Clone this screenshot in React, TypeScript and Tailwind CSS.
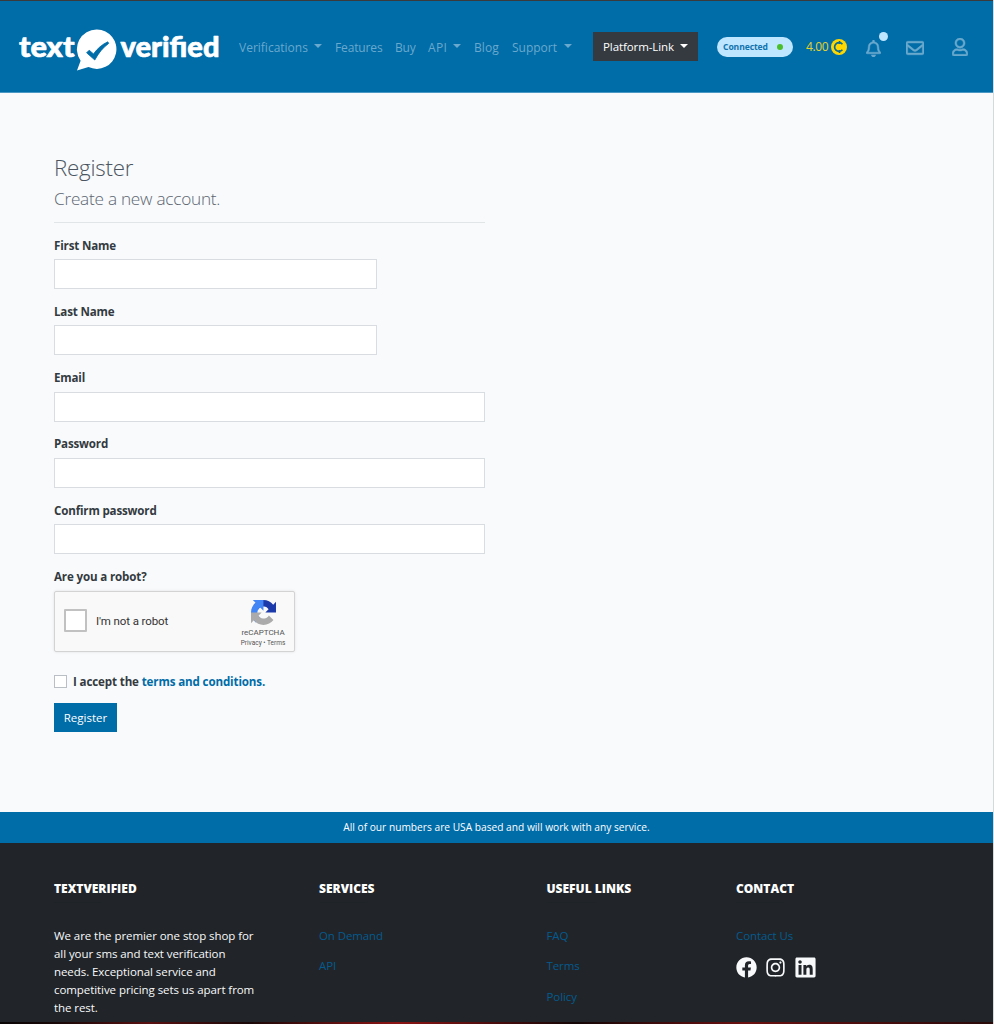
import type { ReactNode } from "react";
import { FaRegBell, FaRegEnvelope, FaRegUser, FaFacebook, FaInstagram, FaLinkedin } from "react-icons/fa";

function Caret({ className = "" }: { className?: string }) {
  return (
    <svg viewBox="0 0 8 4" className={`h-[4px] w-[8px] ${className}`} fill="currentColor">
      <path d="M0 0h8L4 4z" />
    </svg>
  );
}

function Logo() {
  return (
    <svg viewBox="0 0 202 44" className="h-[44px] w-[202px] shrink-0" aria-label="textverified">
      <g fill="#fff" stroke="#fff" strokeWidth="0.7" strokeLinejoin="round" className="font-['Lato',sans-serif] text-[29px] font-black">
        <text x="1" y="28.5" textLength="55.5" lengthAdjust="spacingAndGlyphs">text</text>
        <text x="102.5" y="28.5" textLength="99" lengthAdjust="spacingAndGlyphs">verified</text>
      </g>
      <path d="M79 1.5a19.7 19.7 0 1 1-8.5 37.6L59 42.5l3.6-9.8A19.7 19.7 0 0 1 79 1.5z" fill="#fff" />
      <path d="M68.600 24.800l2.600-2.600 4.300 3.700C79.500 20.500 84 16.500 89.800 13.800l.9 1.600C85 19.500 80.500 25 76.800 32z" fill="#006ca8" stroke="#006ca8" strokeLinejoin="round" strokeWidth="0.8" />
    </svg>
  );
}

function Coin() {
  return (
    <svg viewBox="0 0 16 16" className="h-[16px] w-[16px]">
      <circle cx="8" cy="8" r="8" fill="#ffd700" />
      <path d="M11.400 5.200A4.400 4.400 0 1 0 11.400 10.800M8.500 2v3M8.500 11v3" fill="none" stroke="#0b6a90" strokeWidth="1.700" />
    </svg>
  );
}

function RecaptchaMark() {
  return (
    <svg viewBox="0 0 64 64" className="h-[25px] w-[25px]">
      <path d="M64 31.955l-.033-1.370V4.687l-7.160 7.160C50.948 4.674 42.033.093 32.050.093c-10.400 0-19.622 4.960-25.458 12.640l11.736 11.860a15.550 15.550 0 0 1 4.754-5.334c2.050-1.600 4.952-2.906 8.968-2.906.485 0 .860.057 1.135.163 4.976.393 9.288 3.140 11.828 7.124l-8.307 8.307L64 31.953" fill="#1c3aa9" />
      <path d="M31.862.094l-1.370.033H4.594l7.160 7.160C4.580 13.147 0 22.060 0 32.046c0 10.400 4.960 19.622 12.640 25.458L24.500 45.768a15.550 15.550 0 0 1-5.334-4.754c-1.600-2.050-2.906-4.952-2.906-8.968 0-.485.057-.860.163-1.135.393-4.976 3.140-9.288 7.124-11.828l8.307 8.307L31.860.095" fill="#4285f4" />
      <path d="M.001 32.045l.033 1.370v25.898l7.160-7.160c5.860 7.173 14.774 11.754 24.760 11.754 10.400 0 19.622-4.960 25.458-12.640l-11.736-11.860a15.550 15.550 0 0 1-4.754 5.334c-2.050 1.600-4.952 2.906-8.968 2.906-.485 0-.860-.057-1.135-.163-4.976-.393-9.288-3.140-11.828-7.124l8.307-8.307c-10.522.040-22.400.066-27.295-.005" fill="#ababab" />
    </svg>
  );
}

function Header() {
  return (
    <header className="flex h-[93px] items-center border-t border-b border-t-[#3a3a3c] border-b-[#4c98c4] bg-[#006ca8] pl-[18px] whitespace-nowrap">
      <div className="mt-[6px] w-[221px]"><Logo /></div>
      <nav className="flex items-center pt-[2px] text-[12px] text-[#69a9cd]">
        <a className="flex w-[96px] items-center">Verifications<Caret className="mb-[3px] ml-[6px]" /></a>
        <a className="w-[60px] tracking-[-0.13px]">Features</a>
        <a className="w-[33px] tracking-[-0.2px]">Buy</a>
        <a className="flex w-[46px] items-center tracking-[0.3px]">API<Caret className="mb-[3px] ml-[6px]" /></a>
        <a className="w-[38px] tracking-[0.1px]">Blog</a>
        <a className="flex w-[81px] items-center">Support<Caret className="mb-[3px] ml-[7px]" /></a>
      </nav>
      <button className="flex h-[29px] w-[105px] items-center bg-[#343a40] pt-px pl-[10px] text-[11.5px] tracking-[-0.09px] text-white">
        Platform-Link<Caret className="mb-[3px] ml-[6px]" />
      </button>
      <div className="ml-[19px] flex h-[20px] w-[76px] items-center rounded-full bg-[#bfe6ff] pl-[6px] text-[8.6px] font-bold tracking-[-0.1px] text-[#1173ae]">
        <span className="mt-px w-[45px]">Connected</span><span className="ml-[9px] h-[6px] w-[6px] rounded-full bg-[#4bbf2b]" />
      </div>
      <div className="ml-[13px] flex w-[60px] items-center text-[12px] text-[#e5d32b]">
        <span className="mt-px w-[25px] tracking-[-0.4px]">4.00</span><Coin />
      </div>
      <div className="relative w-[40px] text-[#69a9cd]">
        <FaRegBell className="mt-[3px] h-[17px] w-[15px]" stroke="currentColor" strokeWidth="14" />
        <span className="absolute top-[-5px] left-[13px] h-[9px] w-[9px] rounded-full bg-[#bfe6ff]" />
      </div>
      <FaRegEnvelope className="mt-[2px] mr-[28px] h-[18px] w-[18px] text-[#69a9cd]" stroke="currentColor" strokeWidth="14" />
      <FaRegUser className="h-[18px] w-[16px] text-[#69a9cd]" stroke="currentColor" strokeWidth="14" />
    </header>
  );
}

function Field({ label, width }: { label: string; width: string }) {
  return (
    <div className="h-[66.25px]">
      <label className="block h-[22.7px] text-[11.6px] leading-[18px] font-bold tracking-[-0.18px]">{label}</label>
      <input className={`block h-[30px] border border-[#d9dde1] bg-white ${width}`} />
    </div>
  );
}

function Captcha() {
  return (
    <div className="flex h-[61px] w-[241px] items-center rounded-[2px] border border-[#d3d3d3] bg-[#f9f9f9] pl-[9px] font-['Roboto',sans-serif] shadow-[0_0_3px_rgba(0,0,0,0.1)]">
      <span className="-mt-px h-[23px] w-[23px] rounded-[1px] border-2 border-[#c1c1c1] bg-white" />
      <span className="ml-[9px] w-[139px] text-[11.5px] tracking-[-0.1px] text-[#333]">I'm not a robot</span>
      <div className="flex w-[56px] flex-col items-center pt-[5px] text-[#555]">
        <RecaptchaMark />
        <span className="mt-[3px] text-[8px] leading-[10px]">reCAPTCHA</span>
        <span className="text-[6.5px] leading-[10px] whitespace-nowrap">Privacy • Terms</span>
      </div>
    </div>
  );
}

function FooterColumn({ title, width, children }: { title: string; width: string; children: ReactNode }) {
  return (
    <div className={width}>
      <h6 className="h-[16px] text-[12px] leading-[16px] font-extrabold whitespace-nowrap text-white">{title}</h6>
      <div className="mt-[5px] mb-[24px] h-px w-[48px] bg-[#1e2327]" />
      {children}
    </div>
  );
}

function FooterLink({ children }: { children: ReactNode }) {
  return <a className="block h-[30.6px] text-[11.5px] leading-[18px] tracking-[-0.1px] text-[#045a8e]">{children}</a>;
}

export default function App() {
  return (
    <div className="flex h-[1024px] w-[994px] flex-col overflow-hidden bg-[#d5d9dc] pr-px font-['Open_Sans',sans-serif] text-[#343a40]">
      <Header />
      <main className="h-[718.5px] bg-[#f8fafc] pt-[61px] pl-[54px]">
        <h2 className="h-[30px] text-[22.3px] leading-[28px] font-light tracking-[-0.22px] text-[#4b5560]">Register</h2>
        <h4 className="h-[38.5px] w-[431px] border-b border-[#e2e5e8] text-[17.2px] leading-[30px] font-light tracking-[-0.24px] text-[#5c6570]">Create a new account.</h4>
        <form className="mt-[14px]">
          <Field label="First Name" width="w-[323px]" />
          <Field label="Last Name" width="w-[323px]" />
          <Field label="Email" width="w-[431px]" />
          <Field label="Password" width="w-[431px]" />
          <Field label="Confirm password" width="w-[431px]" />
          <label className="block h-[22.9px] text-[11.6px] leading-[18px] font-bold tracking-[-0.16px]">Are you a robot?</label>
          <Captcha />
          <div className="mt-[21px] flex h-[18px] items-center text-[11.6px] font-bold tracking-[-0.14px]">
            <span className="mr-[6px] h-[13px] w-[13px] border border-[#b9bfc5] bg-white" />
            <span>I accept the <a className="text-[#006ca8]">terms and conditions.</a></span>
          </div>
          <button type="button" className="mt-[12px] block h-[29px] w-[63px] bg-[#006ca8] pt-px text-[11.5px] text-white">Register</button>
        </form>
      </main>
      <div className="flex h-[31px] shrink-0 items-center justify-center bg-[#006ca8] pt-[2px] text-[10.2px] text-white">
        All of our numbers are USA based and will work with any service.
      </div>
      <footer className="flex flex-1 bg-[#212529] pt-[38px] pl-[54px]">
        <FooterColumn title="TEXTVERIFIED" width="w-[265px]">
          <p className="w-[210px] text-[11.5px] leading-[18px] tracking-[-0.07px] text-[#f8f9fa]">
            We are the premier one stop shop for<br />all your sms and text verification<br />needs. Exceptional service and<br />competitive pricing sets us apart from<br />the rest.
          </p>
        </FooterColumn>
        <FooterColumn title="SERVICES" width="w-[227.5px]">
          <FooterLink>On Demand</FooterLink>
          <FooterLink>API</FooterLink>
        </FooterColumn>
        <FooterColumn title="USEFUL LINKS" width="w-[189.5px]">
          <FooterLink>FAQ</FooterLink>
          <FooterLink>Terms</FooterLink>
          <FooterLink>Policy</FooterLink>
        </FooterColumn>
        <FooterColumn title="CONTACT" width="w-[200px]">
          <FooterLink>Contact Us</FooterLink>
          <div className="-mt-px flex items-center text-[#f8f9fa]">
            <FaFacebook className="h-[21px] w-[21px]" />
            <FaInstagram className="ml-[8px] h-[21px] w-[21px]" />
            <FaLinkedin className="ml-[8px] h-[23px] w-[23px]" />
          </div>
        </FooterColumn>
      </footer>
      <div className="h-[2px] shrink-0 bg-[linear-gradient(90deg,#0a0505,#1a0808_6%,#5a1010_15%,#1a0808_25%,#8b1414_40%,#140606_58%,#6a1010_75%,#2a0a0a)]" />
    </div>
  );
}
